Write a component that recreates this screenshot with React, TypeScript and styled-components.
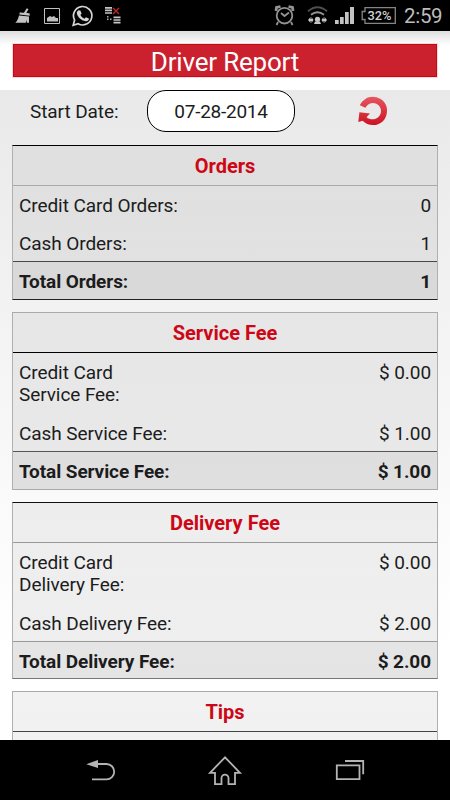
import React from 'react';
import styled, { createGlobalStyle } from 'styled-components';

const GlobalStyle = createGlobalStyle`
  * { box-sizing: border-box; }
  body { margin: 0; background: #000; }
`;

const Screen = styled.div`
  width: 450px;
  height: 800px;
  display: flex;
  flex-direction: column;
  overflow: hidden;
  background: #000;
  color: #1c1c1c;
  font-family: Roboto, sans-serif;
  font-size: 19px;
  font-weight: 400;
  letter-spacing: -0.08px;
`;

const StatusBar = styled.div`
  height: 31px;
  flex: none;
  display: flex;
  align-items: center;
  justify-content: space-between;
  background: #000;
`;

const Clock = styled.span`
  width: 50px;
  padding-left: 4px;
  color: #bcbcbc;
  font-size: 20.5px;
  letter-spacing: -0.3px;
  line-height: 32px;
  white-space: nowrap;
`;

const StatusGroup = styled.div`
  display: flex;
`;

const TitleArea = styled.header`
  height: 59px;
  flex: none;
  padding: 13px 13px 0;
  background: linear-gradient(#dedede, #fff 14px);
`;

const Title = styled.h1`
  height: 33px;
  margin: 0;
  border: 1px solid #cc0610;
  outline: 1px solid #f3dcdd;
  background: #cb212e;
  color: #fff;
  font-size: 26px;
  font-weight: 400;
  letter-spacing: -0.2px;
  line-height: 34px;
  text-align: center;
`;

const Content = styled.main`
  height: 650px;
  flex: none;
  overflow: hidden;
  background: linear-gradient(#e9e9e9, #f3f3f3 230px, #fafafa 410px, #fff 560px);
`;

const DateRow = styled.div`
  height: 55px;
  display: flex;
  align-items: flex-start;
`;

const DateLabel = styled.label`
  width: 147px;
  padding-left: 30px;
  line-height: 44px;
`;

const DateField = styled.button`
  width: 148px;
  height: 42px;
  padding: 0;
  border: 1px solid #000;
  border-radius: 19px;
  background: #fff;
  color: #1c1c1c;
  font: 400 19px/42px Roboto, sans-serif;
  letter-spacing: -0.25px;
`;

const RefreshButton = styled.button`
  width: 32px;
  height: 32px;
  margin: 5px 0 0 62px;
  padding: 0;
  border: 0;
  background: none;
  svg { display: block; }
`;

const Cards = styled.div`
  display: flex;
  flex-direction: column;
  gap: 12px;
  padding: 0 12px;
`;

const Card = styled.section<{ $top: string; $bottom: string; $height: number }>`
  height: ${p => p.$height}px;
  flex: none;
  display: flex;
  flex-direction: column;
  border: 1px solid #b0b0b0;
  border-top-color: ${p => p.$top};
  border-bottom-color: ${p => p.$bottom};
  background: linear-gradient(rgba(0, 0, 0, 0.05), rgba(0, 0, 0, 0.065));
  background-clip: padding-box;
`;

const CardTitle = styled.h2<{ $line: string }>`
  height: 40px;
  flex: none;
  margin: 0;
  border-bottom: 1px solid ${p => p.$line};
  color: #cd0716;
  font-size: 20px;
  font-weight: 700;
  letter-spacing: 0;
  line-height: 40px;
  text-align: center;
`;

const Row = styled.div<{ $tall?: boolean }>`
  height: ${p => (p.$tall ? 60.5 : 37.5)}px;
  flex: none;
  display: flex;
  justify-content: space-between;
  padding: 9px 6px 0;
  line-height: 22px;
`;

const TotalRow = styled(Row)<{ $line: string }>`
  height: auto;
  flex: 1;
  border-top: 1px solid ${p => p.$line};
  background: rgba(0, 0, 0, 0.04);
  font-weight: 700;
`;

const Label = styled.span<{ $narrow?: boolean }>`
  width: ${p => (p.$narrow ? '130px' : 'auto')};
  white-space: ${p => (p.$narrow ? 'normal' : 'nowrap')};
`;

const NavBar = styled.nav`
  height: 60px;
  flex: none;
  background: #000;
  svg { display: block; }
`;

type CardData = {
  title: string;
  height: number;
  lines: [string, string, string, string];
  rows: [string, string][];
  total?: [string, string];
};

const cards: CardData[] = [
  { title: 'Orders', height: 155, lines: ['#000', '#aaa', '#484848', '#222'], rows: [['Credit Card Orders:', '0'], ['Cash Orders:', '1']], total: ['Total Orders:', '1'] },
  { title: 'Service Fee', height: 178, lines: ['#aaa', '#000', '#555', '#aaa'], rows: [['Credit Card Service Fee:', '$ 0.00'], ['Cash Service Fee:', '$ 1.00']], total: ['Total Service Fee:', '$ 1.00'] },
  { title: 'Delivery Fee', height: 177, lines: ['#111', '#999', '#999', '#777'], rows: [['Credit Card Delivery Fee:', '$ 0.00'], ['Cash Delivery Fee:', '$ 2.00']], total: ['Total Delivery Fee:', '$ 2.00'] },
  { title: 'Tips', height: 155, lines: ['#aaa', '#444', '#555', '#222'], rows: [] },
];

const NotificationIcons = () => (
  <svg width="130" height="31" viewBox="0 0 130 31" fill="none">
    <path fill="#c3c3c3" d="M26.8 8.3l1.7.9-2.2 3.5 3.4.8v2.2l-10.2-1.2v-1.9l4.4.1zM19 15.4l10 1v6.3h-2.2v-3l-1 3H15.3c1.8-1.4 3-4 3.7-7.3z" />
    <path stroke="#c0c0c0" strokeWidth="1" d="M44.5 8.5h15v15h-15z" />
    <path fill="#c0c0c0" d="M47 21.5v-3.5l3-2 2 1 2-1 2 2h2v3.5z" />
    <path stroke="#d5d5d5" strokeWidth="1.7" d="M73.2 25.2l1.4-5.1a9.2 9.2 0 1 1 3.5 3.6z" />
    <path fill="#d5d5d5" d="M78.6 10.2l1.7.2 1.3 3-1.2 1.5c1 1.8 2.2 3 4.1 3.8l1.4-1.5 3 1.4c.1 2-1.5 2.9-3.2 2.7-4.6-.6-8.5-4.8-8.9-8.2-.1-1.2.8-2.5 1.8-2.9z" />
    <path stroke="#c5c5c5" strokeWidth="1.7" d="M105 7.8h7M105 10.4h7M105 13h7M113.5 17.3h7M113.5 20h7M113.5 22.7h7" />
    <path stroke="#bd2929" strokeWidth="1.4" d="M113 8l6 6M119 8l-6 6" />
    <path fill="#aaa" d="M107 16h1.5v1.5H107zM107 18.5h1.5V20H107zM110 18.5h1.5V20H110z" />
  </svg>
);

const BatteryText = styled.text`
  fill: #d0d0d0;
  font: 500 12.5px Roboto, sans-serif;
  letter-spacing: 0;
`;

const SystemIcons = () => (
  <svg width="130" height="31" viewBox="270 0 130 31" fill="none">
    <g stroke="#939393" strokeWidth="1.8">
      <circle cx="284.5" cy="15.7" r="7.8" />
      <path d="M281 13l3.5 3 4.5-3.5M278 22l-1.5 3M291 22l1.5 3" />
      <path strokeWidth="2.8" d="M276 11l.5-3.5 4-1M293 11l-.5-3.5-4-1" />
    </g>
    <path stroke="#4f4f4f" strokeWidth="1.9" d="M308 11.3q9.5-8 19 0" />
    <path stroke="#969696" strokeWidth="1.9" d="M311 14.8q6.5-5 13 0" />
    <circle cx="317.5" cy="19.3" r="2.6" fill="#c5c5c5" />
    <path fill="#c5c5c5" d="M308 20l2.5-3v2h1v-2l2 3-2 3v-2h-1v2zM321.5 20l2-3v2h1v-2l2.5 3-2.5 3v-2h-1v2zM315 21.5h5l1 2.5h-7z" />
    <path fill="#c3c3c3" d="M335 20h3.7v4H335zM340 17h3.7v7H340zM345 12h3.7v12H345zM350 7h4v17h-4z" />
    <path stroke="#858585" strokeWidth="1.3" d="M365 7.7h30.3v15.6H365v-3.8h-2.8v-8h2.8z" />
    <BatteryText x="367.5" y="20" textLength="24" lengthAdjust="spacingAndGlyphs">32%</BatteryText>
  </svg>
);

const RefreshIcon = () => (
  <svg width="32" height="32" viewBox="357 95 32 32">
    <defs>
      <linearGradient id="refreshRed" x1="0" y1="0" x2="0" y2="1">
        <stop stopColor="#e65760" />
        <stop offset="1" stopColor="#cd1222" />
      </linearGradient>
    </defs>
    <path fill="url(#refreshRed)" d="M359.8 105.3C362.8 99 369.5 95.2 376.5 97.2C383.5 99.2 387.4 104.5 387 111.4C386.7 119 381 125.2 373 125.1C368.9 125.1 365.3 123.6 362.6 120.8L358.3 122.1L359.4 112.3L370 113.6L366.5 117.2C370.2 120.2 375.2 120 378.4 117C381.9 113.7 381.9 108.4 378.5 105.2C374.5 101.5 368 102.7 365.4 107.8Z" />
  </svg>
);

const App = () => (
  <Screen>
    <GlobalStyle />
    <StatusBar>
      <NotificationIcons />
      <StatusGroup>
        <SystemIcons />
        <Clock>2:59</Clock>
      </StatusGroup>
    </StatusBar>
    <TitleArea>
      <Title>Driver Report</Title>
    </TitleArea>
    <Content>
      <DateRow>
        <DateLabel>Start Date:</DateLabel>
        <DateField>07-28-2014</DateField>
        <RefreshButton aria-label="Refresh"><RefreshIcon /></RefreshButton>
      </DateRow>
      <Cards>
        {cards.map(({ title, height, lines, rows, total }) => (
          <Card key={title} $height={height} $top={lines[0]} $bottom={lines[3]}>
            <CardTitle $line={lines[1]}>{title}</CardTitle>
            {rows.map(([label, value]) => {
              const tall = label.startsWith('Credit') && title !== 'Orders';
              return (
                <Row key={label} $tall={tall}>
                  <Label $narrow={tall}>{label}</Label>
                  <span>{value}</span>
                </Row>
              );
            })}
            {total && (
              <TotalRow $line={lines[2]}>
                <Label>{total[0]}</Label>
                <span>{total[1]}</span>
              </TotalRow>
            )}
          </Card>
        ))}
      </Cards>
    </Content>
    <NavBar>
      <svg width="450" height="60" viewBox="0 740 450 60" fill="none" stroke="#b4b4b4" strokeWidth="1.8">
        <path d="M92 764h14.5a7.7 7.7 0 0 1 0 15.4H92" />
        <path fill="#b4b4b4" stroke="none" d="M86.3 764.2L98 760v8z" />
        <path d="M225 757.3l-15 15.5h5v11.3h6.5v-6a3.5 3.5 0 0 1 7 0v6h6.5v-11.3h5z" />
        <path d="M336.8 765.3h22.7v13.8h-22.7zM345 761h18.2v13.3" />
      </svg>
    </NavBar>
  </Screen>
);

export default App;
